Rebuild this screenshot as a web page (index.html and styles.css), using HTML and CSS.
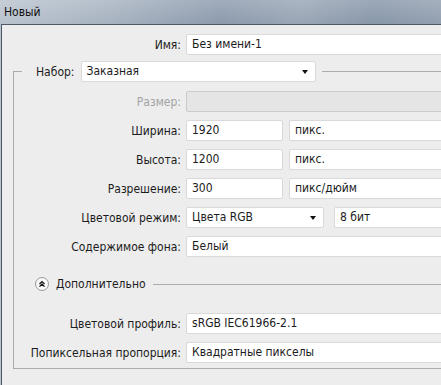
FILE: index.html
```html
<!DOCTYPE html>
<html lang="ru">
<head>
<meta charset="utf-8">
<title>Новый</title>
<link rel="stylesheet" href="styles.css">
</head>
<body>
<div class="window">
  <div class="titlebar">Новый</div>
  <div class="client">
    <div class="row name-row">
      <span class="label">Имя:</span>
      <div class="field wide">Без имени-1</div>
    </div>
    <fieldset class="group">
      <legend class="preset">
        <span class="preset-label">Набор:</span>
        <div class="field select preset-select">Заказная<span class="arrow"></span></div>
      </legend>
      <div class="rows">
        <div class="row">
          <span class="label disabled">Размер:</span>
          <div class="field wide off"></div>
        </div>
        <div class="row">
          <span class="label">Ширина:</span>
          <div class="field num">1920</div>
          <div class="field wide">пикс.</div>
        </div>
        <div class="row">
          <span class="label">Высота:</span>
          <div class="field num">1200</div>
          <div class="field wide">пикс.</div>
        </div>
        <div class="row">
          <span class="label">Разрешение:</span>
          <div class="field num">300</div>
          <div class="field wide">пикс/дюйм</div>
        </div>
        <div class="row">
          <span class="label">Цветовой режим:</span>
          <div class="field select mode">Цвета RGB<span class="arrow"></span></div>
          <div class="field wide bits">8 бит</div>
        </div>
        <div class="row">
          <span class="label">Содержимое фона:</span>
          <div class="field wide">Белый</div>
        </div>
      </div>
      <div class="advanced">
        <span class="toggle">
          <svg width="14" height="14" viewBox="0 0 14 14">
            <circle cx="7" cy="7" r="6.5" fill="#f7f7f7" stroke="#9a9a9a"/>
            <path d="M4.5 7 L7 4.6 L9.5 7 M4.5 9.6 L7 7.2 L9.5 9.6" fill="none" stroke="#111" stroke-width="1.3"/>
          </svg>
        </span>
        <span class="adv-text">Дополнительно</span>
        <span class="adv-line"></span>
      </div>
      <div class="rows">
        <div class="row">
          <span class="label">Цветовой профиль:</span>
          <div class="field wide">sRGB IEC61966-2.1</div>
        </div>
        <div class="row">
          <span class="label">Попиксельная пропорция:</span>
          <div class="field wide">Квадратные пикселы</div>
        </div>
      </div>
    </fieldset>
  </div>
</div>
</body>
</html>
```

FILE: styles.css
```css
html, body {
  margin: 0;
  padding: 0;
  width: 441px;
  height: 385px;
  overflow: hidden;
}
body {
  font-family: "DejaVu Sans Condensed", "DejaVu Sans", sans-serif;
  font-size: 12px;
  color: #1c1c1c;
}
.window {
  width: 441px;
  height: 385px;
  background: linear-gradient(90deg, #b9c3ce 0%, #a7b2c0 25%, #8c9aad 50%, #99a5b5 68%, #8796a9 85%, #929fb0 100%);
  overflow: hidden;
}
.titlebar {
  height: 24px;
  line-height: 24px;
  padding-left: 4px;
  color: #111;
  background: linear-gradient(180deg, rgba(255,255,255,0.18), rgba(255,255,255,0));
}
.client {
  margin-left: 1px;
  width: 470px;
  height: 356px;
  background: #ededed;
  border-top: 1px solid #4f5866;
  border-left: 1px solid #4f5866;
  border-bottom: 1px solid #4f5866;
  padding-top: 9px;
  box-sizing: content-box;
}
.row {
  display: flex;
  align-items: center;
  height: 21px;
}
.label {
  width: 184px;
  text-align: right;
  padding-right: 5px;
  box-sizing: border-box;
  flex: none;
  white-space: nowrap;
}
.label.disabled {
  color: #a3a3a3;
}
.field {
  height: 21px;
  box-sizing: border-box;
  background: #fff;
  border: 1px solid #d9d9d9;
  border-radius: 2px;
  padding: 0 5px;
  line-height: 19px;
  white-space: nowrap;
  position: relative;
}
.field.wide {
  flex: 1;
}
.field.off {
  background: #e5e5e5;
  border-color: #cbcbcb;
}
.group {
  margin: 6px 0 0 11px;
  padding: 9px 0 5px 0;
  border: 1px solid #ababab;
  min-width: 0;
}
.group .label {
  width: 172px;
}
.preset {
  display: flex;
  align-items: center;
  margin-left: 8px;
  padding: 0 6px 0 14px;
}
.preset-label {
  margin-right: 6px;
}
.preset-select {
  width: 235px;
}
.arrow {
  position: absolute;
  right: 7px;
  top: 8px;
  width: 0;
  height: 0;
  border-left: 3.5px solid transparent;
  border-right: 3.5px solid transparent;
  border-top: 4px solid #111;
}
.rows {
  display: flex;
  flex-direction: column;
  gap: 8px;
}
.num {
  width: 97px;
  flex: none;
  margin-right: 6px;
}
.mode {
  width: 138px;
  flex: none;
  margin-right: 10px;
}
.advanced {
  display: flex;
  align-items: center;
  height: 16px;
  margin: 19px 0 21px 21px;
}
.toggle {
  display: flex;
  width: 14px;
  height: 14px;
  margin-right: 7px;
}
.adv-text {
  margin-right: 7px;
}
.adv-line {
  flex: 1;
  border-top: 1px solid #ababab;
}
```
